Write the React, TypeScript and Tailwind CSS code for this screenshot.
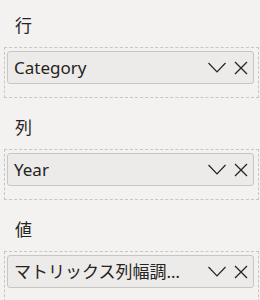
interface WellProps {
  label: string;
  field: string;
}

const FieldWell = ({ label, field }: WellProps) => {
  return (
    <section className="h-[102px]">
      <div className="h-[47px] pl-[15px] pt-[16px] text-[17px] leading-[20px] text-[#252423]">
        {label}
      </div>
      <div className="ml-[4px] w-[255px] border border-dashed border-[#c8c6c4] pl-[2px] pr-[4px] pt-[3px] pb-[13px]">
        <div className="flex h-[33px] items-center rounded-[3px] border border-[#c8c6c4] bg-[#edebe9] pl-[6px] pr-[5px]">
          <span className="min-w-0 flex-1 truncate text-[17px] text-[#252423]">
            {field}
          </span>
          {/* chevron */}
          <svg
            width="18"
            height="11"
            viewBox="0 0 18 11"
            className="ml-[14px] shrink-0 text-[#252423]"
          >
            <path d="M0.5 1 L9 10 L17.5 1" fill="none" stroke="currentColor" strokeWidth="1.2" />
          </svg>
          {/* remove */}
          <svg
            width="14"
            height="14"
            viewBox="0 0 14 14"
            className="ml-[8px] shrink-0 text-[#252423]"
          >
            <path d="M1 1 L13 13 M13 1 L1 13" fill="none" stroke="currentColor" strokeWidth="1.3" />
          </svg>
        </div>
      </div>
    </section>
  );
};

export default function App() {
  return (
    <div
      className="h-[300px] w-[260px] overflow-hidden bg-[#f3f2f1]"
      style={{ fontFamily: '"Noto Sans", "Noto Sans CJK JP", sans-serif' }}
    >
      <FieldWell label="行" field="Category" />
      <FieldWell label="列" field="Year" />
      <FieldWell label="値" field="マトリックス列幅調整サンプル" />
    </div>
  );
}
